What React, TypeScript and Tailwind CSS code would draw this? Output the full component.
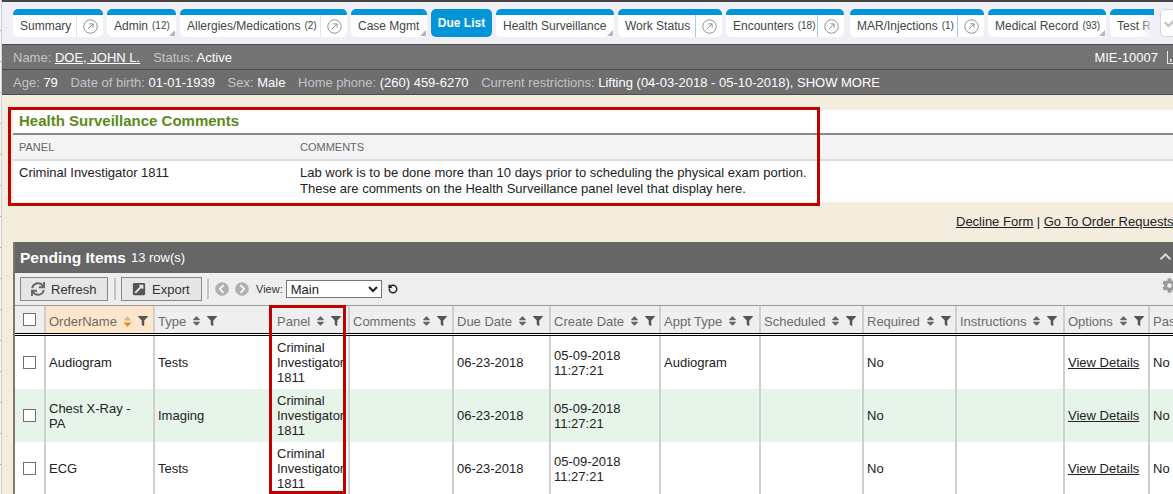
import { FaCog, FaChevronCircleLeft, FaChevronCircleRight, FaChevronUp, FaExternalLinkSquareAlt, FaFilter, FaSort, FaSync, FaCheck } from "react-icons/fa"
import { RotateCw } from "lucide-react"

type Tab = { label: string; count?: string; width: string; link?: boolean; menu?: boolean; active?: boolean; accent?: boolean }

const tabs: Tab[] = [
  { label: "Summary", width: "w-[90px]", link: true },
  { label: "Admin", count: "(12)", width: "w-[69px]", menu: true },
  { label: "Allergies/Medications", count: "(2)", width: "w-[167px]", link: true },
  { label: "Case Mgmt", width: "w-[76px]", menu: true },
  { label: "Due List", width: "w-[61px]", active: true },
  { label: "Health Surveillance", width: "w-[118px]", menu: true },
  { label: "Work Status", width: "w-[104px]", link: true, accent: true },
  { label: "Encounters", count: "(18)", width: "w-[118px]", link: true, accent: true },
  { label: "MAR/Injections", count: "(1)", width: "w-[134px] ml-[2px]", link: true, accent: true },
  { label: "Medical Record", count: "(93)", width: "w-[118px]", menu: true },
]

const cols =
  "grid grid-cols-[29px_109px_117px_78px_104px_97px_110px_100px_103px_93px_108px_85px_60px]"

const headers = [
  "OrderName",
  "Type",
  "Panel",
  "Comments",
  "Due Date",
  "Create Date",
  "Appt Type",
  "Scheduled",
  "Required",
  "Instructions",
  "Options",
]

const rows = [
  { name: "Audiogram", type: "Tests", appt: "Audiogram", stripe: false },
  { name: "Chest X-Ray - PA", type: "Imaging", appt: "", stripe: true },
  { name: "ECG", type: "Tests", appt: "", stripe: false },
]

function TabLink({ accent }: { accent?: boolean }) {
  return (
    <div className={`flex h-full w-[27px] shrink-0 items-center justify-center border-l ${accent ? "border-[#9ad4f0]" : "border-[#e4e4e4]"}`}>
      <svg viewBox="0 0 16 16" className="h-[15px] w-[15px] text-[#8c8c8c]" fill="none" stroke="currentColor">
        <circle cx="8" cy="8" r="7.2" strokeWidth="1" />
        <path d="M5.2 10.8 10.6 5.4M6.6 5.2h4.2v4.2" strokeWidth="1" />
      </svg>
    </div>
  )
}

function TabItem({ tab }: { tab: Tab }) {
  if (tab.active) {
    return (
      <div className={`${tab.width} flex h-[28px] shrink-0 items-center justify-center rounded-[5px] bg-[#0296d9] text-xs font-bold text-white`}>
        {tab.label}
      </div>
    )
  }
  return (
    <div className={`${tab.width} relative flex h-[28px] shrink-0 overflow-hidden rounded-[5px] border-t-[6px] border-[#0296d9] bg-white text-xs text-[#444]`}>
      <div className="flex min-w-0 flex-1 items-center whitespace-nowrap pl-[7px]">
        {tab.label}
        {tab.count && <span className="ml-1 text-[10px]">{tab.count}</span>}
      </div>
      {tab.link && <TabLink accent={tab.accent} />}
      {tab.menu && (
        <div className="absolute bottom-[1px] right-[1px] h-0 w-0 border-b-[6px] border-l-[6px] border-b-[#b5b5b5] border-l-transparent" />
      )}
    </div>
  )
}

function Label({ name, value }: { name: string; value: string }) {
  return (
    <span className="whitespace-nowrap text-[#c4c4c4]">
      {name} <span className="text-white">{value}</span>
    </span>
  )
}

function Checkbox() {
  return <div className="h-[13px] w-[13px] border border-[#707070] bg-white" />
}

function HeaderCell({ label, sorted }: { label: string; sorted?: boolean }) {
  return (
    <div className={`flex items-center gap-[6px] overflow-hidden whitespace-nowrap border-l-2 border-[#cfcfcf] pt-[3px] ${label === "Panel" ? "pl-[5px]" : "pl-[3px]"} ${sorted ? "bg-[#fde6cb]" : ""}`}>
      <span className="text-[#6b6b6b]">{label}</span>
      {sorted ? (
        <svg viewBox="0 0 10 12" className="h-[11px] w-[9px] shrink-0">
          <path d="M5 0 9.5 5H.5z" fill="#c9c0b2" />
          <path d="M5 12 .5 7h9z" fill="#f08c14" />
        </svg>
      ) : (
        <FaSort className="h-[12px] w-[9px] shrink-0 text-[#666]" />
      )}
      <FaFilter className="h-[10px] w-[10px] shrink-0 text-[#555]" />
    </div>
  )
}

function BodyCell({ children, className }: { children?: React.ReactNode; className?: string }) {
  return (
    <div className={`flex items-center overflow-hidden border-l-2 border-[#cfcfcf] text-[#222] ${className ?? "pl-[3px]"}`}>
      <div>{children}</div>
    </div>
  )
}

export default function App() {
  return (
    <div className="flex h-[494px] w-[1173px] overflow-hidden bg-[#f4ecdd] font-['Liberation_Sans',Arial,sans-serif] text-[13px] leading-[15px]">
      {/* Left edge of the frame */}
      <div className="h-full w-[2px] shrink-0 border-r border-[#cfcfcf] bg-[repeating-linear-gradient(to_bottom,#f6f6f6_0,#f6f6f6_30px,#b4b4b4_30px,#b4b4b4_31px)]" />

      <div className="relative h-full w-[1171px] shrink-0 overflow-hidden">
        {/* Tab strip */}
        <div className="h-[44px] border-t-2 border-[#444] bg-[#efeff5] pt-[7px]">
          <div className="flex gap-[4px] pl-[11px]">
            {tabs.map((tab) => (
              <TabItem key={tab.label} tab={tab} />
            ))}
            <div className="relative flex h-[28px] w-[44px] shrink-0 items-center overflow-hidden rounded-l-[5px] border-t-[6px] border-[#0296d9] bg-white pl-[7px] text-xs text-[#444]">
              <span className="whitespace-nowrap">Test R</span>
              <div className="absolute -top-[6px] bottom-0 right-0 w-[14px] bg-gradient-to-r from-transparent to-[#efeff5]" />
            </div>
            <div className="ml-[2px] flex h-[28px] w-[24px] shrink-0 items-center rounded-[5px] border border-[#d6d6d6] bg-white pl-[3px]">
              <FaCheck className="h-[12px] w-[12px] text-[#c4c4c4]" />
            </div>
          </div>
        </div>

        {/* Patient bars */}
        <div className="flex h-[26px] items-center gap-[13px] border-y border-[#4c4c4c] bg-[#737373] pl-[11px]">
          <span className="text-[#c4c4c4]">
            Name: <span className="text-white underline">DOE, JOHN L.</span>
          </span>
          <Label name="Status:" value="Active" />
          <div className="ml-auto flex items-center gap-[9px] whitespace-nowrap text-white">
            MIE-10007
            <svg viewBox="0 0 6 13" className="h-[13px] w-[6px] text-[#e8e8e8]" fill="currentColor">
              <path d="M0 0h1v12h5v1H0zM3 8h1.5v3H3z" />
            </svg>
          </div>
        </div>
        <div className="flex h-[25px] items-center gap-[12.6px] whitespace-nowrap border-b border-[#4c4c4c] bg-[#6e6e6e] pl-[11px]">
          <Label name="Age:" value="79" />
          <Label name="Date of birth:" value="01-01-1939" />
          <Label name="Sex:" value="Male" />
          <Label name="Home phone:" value="(260) 459-6270" />
          <Label name="Current restrictions:" value="Lifting (04-03-2018 - 05-10-2018), SHOW MORE" />
        </div>

        {/* Comments */}
        <div className="ml-[11px] mt-[15px] h-[92px] bg-white">
          <div className="flex h-[25px] items-center border-b-2 border-[#8a8a8a] pb-[2px] pl-[6px] text-[15px] font-bold text-[#5b8a1c]">
            Health Surveillance Comments
          </div>
          <div className="flex h-[26px] items-center border-b-2 border-[#dcdcdc] bg-[#f4f4f7] pl-[6px] text-[11px] text-[#666]">
            <div className="w-[281px]">PANEL</div>
            <div>COMMENTS</div>
          </div>
          <div className="flex pl-[6px] pt-[4px] leading-[16px] text-[#222]">
            <div className="w-[281px]">Criminal Investigator 1811</div>
            <div>
              Lab work is to be done more than 10 days prior to scheduling the physical exam portion.
              <br />
              These are comments on the Health Surveillance panel level that display here.
            </div>
          </div>
        </div>

        {/* Links */}
        <div className="mt-[12px] flex h-[15px] whitespace-nowrap pl-[954px] text-[#222]">
          <span className="underline">Decline Form</span>
          <span className="px-[3.5px]">|</span>
          <span className="underline">Go To Order Requests</span>
        </div>

        {/* Pending items */}
        <div className="relative ml-[11px] mt-[13px] border-l-2 border-[#7d776c]">
          <div className="flex h-[31px] items-center bg-[#666] pb-[1px] pl-[5px] text-white">
            <span className="text-[15.5px] font-bold">Pending Items</span>
            <span className="ml-[5px]">13 row(s)</span>
            <FaChevronUp className="ml-auto mb-[1px] h-[13px] w-[15px] text-[#d8d8d8]" />
          </div>

          <div className="flex h-[32px] items-center bg-[#eee] pl-[5px]">
            <button className="flex h-[24px] w-[88px] items-center gap-[6px] border border-[#888] bg-[#e6e6e6] pl-[10px] text-[#333]">
              <FaSync className="h-[14px] w-[14px] text-[#666]" />
              Refresh
            </button>
            <div className="ml-[6px] mr-[5px] h-[22px] w-[2px] bg-[#c4c4c4]" />
            <button className="flex h-[24px] w-[81px] items-center gap-[6px] border border-[#888] bg-[#e6e6e6] pl-[10px] text-[#333]">
              <FaExternalLinkSquareAlt className="h-[14px] w-[14px] text-[#555]" />
              Export
            </button>
            <div className="ml-[5px] mr-[6px] h-[20px] w-[2px] bg-[#c4c4c4]" />
            <FaChevronCircleLeft className="h-[14px] w-[14px] text-[#b0b0b0]" />
            <FaChevronCircleRight className="ml-[6px] h-[14px] w-[14px] text-[#b0b0b0]" />
            <span className="ml-[7px] text-[11px] text-[#333]">View:</span>
            <select className="ml-[3px] h-[18px] w-[96px] border border-[#777] bg-white text-[13px] text-[#222]">
              <option>Main</option>
            </select>
            <RotateCw className="ml-[6px] h-[10px] w-[10px] -scale-x-100 text-[#222]" strokeWidth={3.5} />
            <FaCog className="ml-auto mb-[7px] mr-[-4px] h-[15px] w-[15px] shrink-0 text-[#9a9a9a]" />
          </div>

          {/* Table */}
          <div className={`${cols} h-[28px] border-t border-[#999] bg-[#efefef]`}>
            <div className="flex items-center justify-center">
              <Checkbox />
            </div>
            {headers.map((h) => (
              <HeaderCell key={h} label={h} sorted={h === "OrderName"} />
            ))}
            <div className="flex items-center overflow-hidden border-l-2 border-[#cfcfcf] pl-[3px] pt-[3px] text-[#6b6b6b]">Pas</div>
          </div>
          <div className="h-[3px] border-y border-black bg-white" />

          {rows.map((row) => (
            <div key={row.name} className={`${cols} h-[53px] ${row.stripe ? "bg-[#e7f4ea]" : "bg-white"}`}>
              <div className="flex items-center justify-center">
                <Checkbox />
              </div>
              <BodyCell className="pl-[3px] pr-[16px]">{row.name}</BodyCell>
              <BodyCell>{row.type}</BodyCell>
              <BodyCell className="pl-[5px]">
                <div className="whitespace-nowrap">
                  Criminal
                  <br />
                  Investigator
                  <br />
                  1811
                </div>
              </BodyCell>
              <BodyCell />
              <BodyCell>06-23-2018</BodyCell>
              <BodyCell>
                05-09-2018
                <br />
                11:27:21
              </BodyCell>
              <BodyCell>{row.appt}</BodyCell>
              <BodyCell />
              <BodyCell>No</BodyCell>
              <BodyCell />
              <BodyCell>
                <span className="underline">View Details</span>
              </BodyCell>
              <BodyCell>No</BodyCell>
            </div>
          ))}

          {/* Panel column highlight */}
          <div className="absolute bottom-[1px] left-[254px] top-[63px] w-[77px] border-[3px] border-[#bd0000]" />
        </div>

        {/* Comments highlight */}
        <div className="absolute left-[6px] top-[107px] h-[99px] w-[812px] border-[3px] border-[#bd0000]" />
      </div>
    </div>
  )
}
